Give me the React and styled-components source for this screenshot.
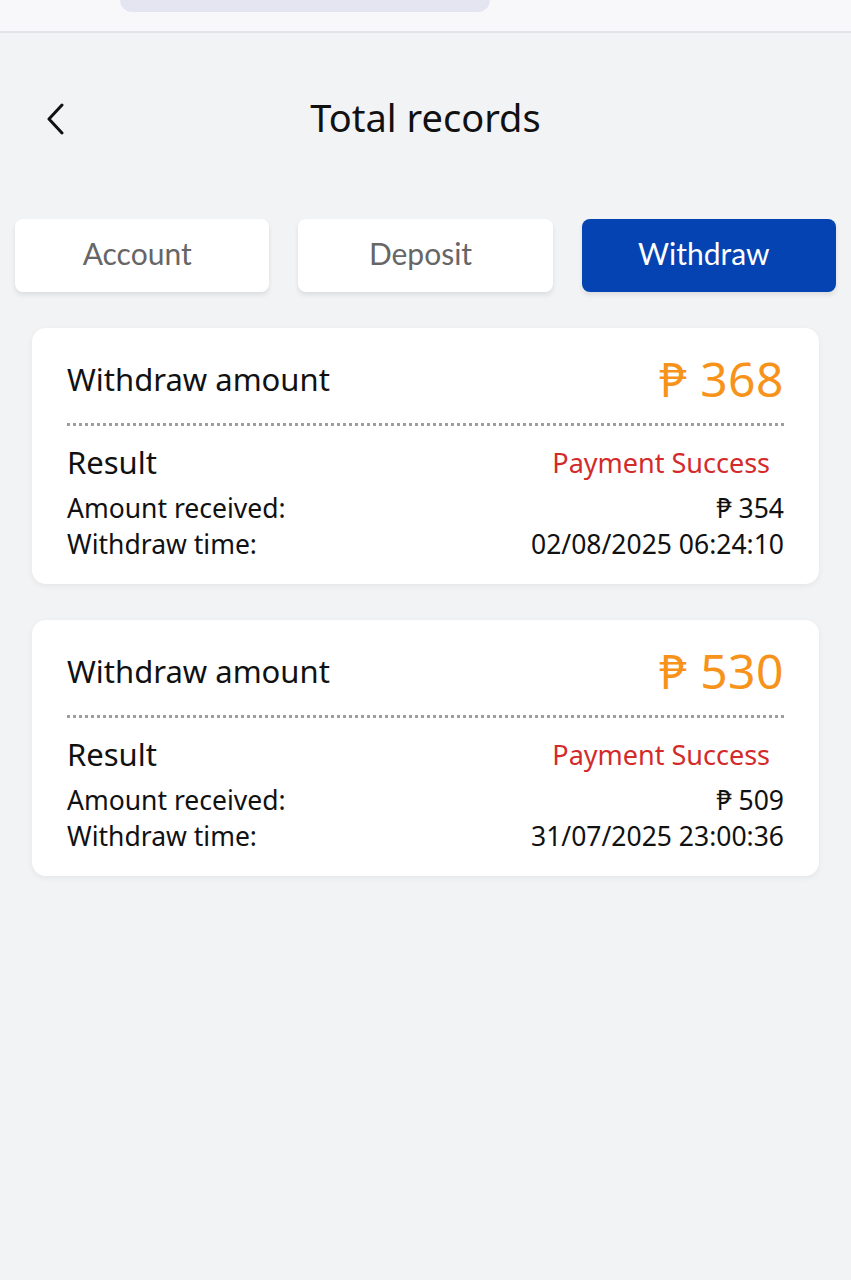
import React from "react";
import styled, { createGlobalStyle } from "styled-components";

const Global = createGlobalStyle`
  body {
    margin: 0;
    background: #f2f3f5;
    font-family: "Noto Sans", "Open Sans", sans-serif;
  }
`;

const Page = styled.div`
  width: 851px;
  min-height: 1280px;
  background: #f2f3f5;
`;

const StatusBar = styled.div`
  height: 31px;
  background: #f8f8fb;
  border-bottom: 2px solid #e3e4e8;
  display: flex;
  padding-left: 120px;
`;

const Pill = styled.div`
  width: 370px;
  height: 12px;
  background: #e4e5f1;
  border-radius: 0 0 24px 24px;
`;

const Header = styled.div`
  height: 186px;
  display: flex;
  align-items: flex-start;
  position: relative;
  padding-top: 69px;
  box-sizing: border-box;
`;

const Back = styled.button`
  border: none;
  background: none;
  padding: 0;
  margin-left: 45px;
  width: 30px;
  height: 34px;
  display: flex;
  align-items: center;
  cursor: pointer;
`;

const Title = styled.h1`
  margin: 0;
  position: absolute;
  left: 0;
  right: 0;
  top: 58px;
  text-align: center;
  font-family: "Noto Sans", sans-serif;
  font-weight: 400;
  font-size: 38px;
  color: #111;
  pointer-events: none;
`;

const Tabs = styled.div`
  display: grid;
  grid-template-columns: repeat(3, 1fr);
  gap: 29px;
  padding: 0 15px;
`;

const Tab = styled.div`
  height: 73px;
  box-sizing: border-box;
  padding: 0 10px 6px 0;
  border-radius: 8px;
  display: flex;
  align-items: center;
  justify-content: center;
  font-family: Lato, sans-serif;
  font-size: 30px;
  background: ${p => (p.active ? "#0443b1" : "#fff")};
  color: ${p => (p.active ? "#fff" : "#666")};
  box-shadow: 0 3px 5px rgba(0, 0, 0, 0.09);
`;

const List = styled.div`
  display: flex;
  flex-direction: column;
  gap: 36px;
  padding: 36px 32px 0;
`;

const Card = styled.div`
  background: #fff;
  border-radius: 14px;
  padding: 14px 35px 22px;
  box-shadow: 0 2px 6px rgba(0, 0, 0, 0.06);
`;

const Top = styled.div`
  display: flex;
  justify-content: space-between;
  align-items: center;
  height: 73px;
  border-bottom: 3px dotted #9e9e9e;
  padding-bottom: 8px;
`;

const CardTitle = styled.div`
  font-size: 31px;
  color: #111;
`;

const Amount = styled.div`
  font-size: 48px;
  color: #f7931a;
  letter-spacing: 0.5px;
`;

const Row = styled.div`
  display: flex;
  justify-content: space-between;
  align-items: center;
  height: ${p => p.h || 36}px;
  margin-top: ${p => p.gap || 0}px;
  font-size: ${p => p.size || 26.5}px;
  color: #111;
`;

const Status = styled.span`
  color: #d32b2b;
  font-size: 27px;
  margin-right: 14px;
`;

const records = [
  { amount: 368, received: 354, time: "02/08/2025 06:24:10" },
  { amount: 530, received: 509, time: "31/07/2025 23:00:36" },
];

export default function App() {
  return (
    <Page>
      <Global />
      <StatusBar>
        <Pill />
      </StatusBar>
      <Header>
        <Back>
          <svg width="22" height="32" viewBox="0 0 22 32" fill="none">
            <path d="M17 2 L4 16 L17 30" stroke="#111" strokeWidth="3" strokeLinecap="round" strokeLinejoin="round" />
          </svg>
        </Back>
        <Title>Total records</Title>
      </Header>
      <Tabs>
        <Tab>Account</Tab>
        <Tab>Deposit</Tab>
        <Tab active>Withdraw</Tab>
      </Tabs>
      <List>
        {records.map(r => (
          <Card key={r.time}>
            <Top>
              <CardTitle>Withdraw amount</CardTitle>
              <Amount>₱ {r.amount}</Amount>
            </Top>
            <Row h={56} size={31} gap={8}>
              <span>Result</span>
              <Status>Payment Success</Status>
            </Row>
            <Row>
              <span>Amount received:</span>
              <span>₱ {r.received}</span>
            </Row>
            <Row>
              <span>Withdraw time:</span>
              <span>{r.time}</span>
            </Row>
          </Card>
        ))}
      </List>
    </Page>
  );
}
